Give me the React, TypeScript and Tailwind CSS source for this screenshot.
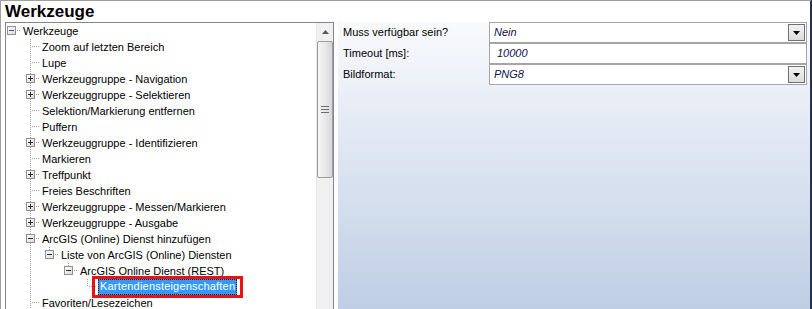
import React from 'react';

type TreeRow = {
  text: string;
  level: number;
  box?: '+' | '-';
  guides: boolean[];
  last?: boolean;
  selected?: boolean;
};

const L1 = [false];

const ROWS: TreeRow[] = [
  { text: 'Werkzeuge', level: 0, box: '-', guides: [], last: true },
  { text: 'Zoom auf letzten Bereich', level: 1, guides: L1 },
  { text: 'Lupe', level: 1, guides: L1 },
  { text: 'Werkzeuggruppe - Navigation', level: 1, box: '+', guides: L1 },
  { text: 'Werkzeuggruppe - Selektieren', level: 1, box: '+', guides: L1 },
  { text: 'Selektion/Markierung entfernen', level: 1, guides: L1 },
  { text: 'Puffern', level: 1, guides: L1 },
  { text: 'Werkzeuggruppe - Identifizieren', level: 1, box: '+', guides: L1 },
  { text: 'Markieren', level: 1, guides: L1 },
  { text: 'Treffpunkt', level: 1, box: '+', guides: L1 },
  { text: 'Freies Beschriften', level: 1, guides: L1 },
  { text: 'Werkzeuggruppe - Messen/Markieren', level: 1, box: '+', guides: L1 },
  { text: 'Werkzeuggruppe - Ausgabe', level: 1, box: '+', guides: L1 },
  { text: 'ArcGIS (Online) Dienst hinzufügen', level: 1, box: '-', guides: L1 },
  { text: 'Liste von ArcGIS (Online) Diensten', level: 2, box: '-', guides: [false, true], last: true },
  { text: 'ArcGIS Online Dienst (REST)', level: 3, box: '-', guides: [false, true, false], last: true },
  { text: 'Kartendiensteigenschaften', level: 4, guides: [false, true, false, false], last: true, selected: true },
  { text: 'Favoriten/Lesezeichen', level: 1, guides: L1 },
];

const DOT = { stroke: '#a0a0a0', strokeWidth: 1, strokeDasharray: '1 1', shapeRendering: 'crispEdges' as const };

// one 19px indent column: vertical guide of an ancestor
const Guide = ({ on }: { on: boolean }) => (
  <svg width="19" height="16" className="shrink-0">
    {on && <line x1="5.5" y1="0" x2="5.5" y2="16" {...DOT} />}
  </svg>
);

// connector + expander box of the row itself
const Connector = ({ row }: { row: TreeRow }) => {
  const hasParent = row.level > 0;
  return (
    <svg width="15" height="16" className="shrink-0">
      {hasParent && <line x1="5.5" y1="0" x2="5.5" y2={row.box ? 3 : 8} {...DOT} />}
      {hasParent && !row.last && <line x1="5.5" y1={row.box ? 12 : 8} x2="5.5" y2="16" {...DOT} />}
      <line x1={row.box ? 11 : 7} y1="7.5" x2="15" y2="7.5" {...DOT} />
      {row.box && (
        <g shapeRendering="crispEdges">
          <defs>
            <linearGradient id="bx" x1="0" y1="0" x2="1" y2="1">
              <stop offset="0" stopColor="#ffffff" />
              <stop offset="1" stopColor="#d8d8d8" />
            </linearGradient>
          </defs>
          <rect x="1.5" y="3.5" width="8" height="8" fill="url(#bx)" stroke="#919191" />
          <line x1="3" y1="7.5" x2="8" y2="7.5" stroke={row.level === 0 ? '#2d5aa8' : '#2b2b2b'} />
          {row.box === '+' && <line x1="5.5" y1="5" x2="5.5" y2="10" stroke="#2b2b3f" />}
        </g>
      )}
    </svg>
  );
};

const TreeItem = ({ row }: { row: TreeRow }) => (
  <div className="flex h-[16px] items-center whitespace-nowrap">
    {row.guides.map((g, i) => (
      <Guide key={i} on={g} />
    ))}
    <Connector row={row} />
    {row.selected ? (
      <span className="relative ml-[1px] h-[16px] bg-[#3399ff] px-[2px] leading-[14px] tracking-[0.2px] text-white outline-1 outline-dotted outline-offset-[-1px] outline-[#1f1f1f]">
        {row.text}
        <span className="pointer-events-none absolute -inset-x-[6px] -inset-y-[3px] border-[3px] border-[#ee1111]" />
      </span>
    ) : (
      <span className="px-[2px] leading-[16px] text-black">{row.text}</span>
    )}
  </div>
);

const Scrollbar = () => (
  <div className="flex w-[17px] shrink-0 flex-col border-l border-[#e6e6e6] bg-[#f0f0f0]">
    <div className="flex h-[17px] items-center justify-center">
      <svg width="7" height="4">
        <path d="M3.5 0 L7 4 L0 4 Z" fill="#5a5a5a" />
      </svg>
    </div>
    <div className="mt-[1px] flex h-[137px] items-center justify-center rounded-[2px] border border-[#9c9c9c] bg-linear-to-r from-[#f4f4f4] via-[#e9e9e9] to-[#d6d6d6]">
      <svg width="8" height="7">
        <line x1="0" y1="0.5" x2="8" y2="0.5" stroke="#6e6e6e" />
        <line x1="0" y1="3.5" x2="8" y2="3.5" stroke="#6e6e6e" />
        <line x1="0" y1="6.5" x2="8" y2="6.5" stroke="#6e6e6e" />
      </svg>
    </div>
  </div>
);

const DropButton = () => (
  <div className="mr-[1px] flex h-[17px] w-[17px] items-center justify-center border border-[#707070] bg-linear-to-b from-[#f2f2f2] to-[#dcdcdc]">
    <svg width="7" height="4">
      <path d="M0 0 L7 0 L3.5 4 Z" fill="#000" />
    </svg>
  </div>
);

const PROPS = [
  { label: 'Muss verfügbar sein?', value: 'Nein', drop: true },
  { label: 'Timeout [ms]:', value: '10000', drop: false },
  { label: 'Bildformat:', value: 'PNG8', drop: true },
];

export default function App() {
  return (
    <div
      className="h-[309px] w-[812px] overflow-hidden border-t border-l border-r-2 border-[#a0a0a0] border-r-[#26324c] bg-white"
      style={{ fontFamily: '"Liberation Sans", Arial, sans-serif' }}
    >
      <div className="h-[21px] pl-[4px] text-[17px] font-bold leading-[21px] text-black">Werkzeuge</div>

      <div className="flex h-[300px]">
        <div className="ml-[4px] flex w-[329px] shrink-0 border border-[#828790]">
          <div className="flex-1 overflow-hidden text-[11px]">
            {ROWS.map((r, i) => (
              <TreeItem key={i} row={r} />
            ))}
          </div>
          <Scrollbar />
        </div>

        <div className="ml-[4px] flex-1 bg-linear-to-b from-[#f9fafd] to-[#bccce3] text-[11px]">
          {PROPS.map((p, i) => (
            <div key={i} className="flex h-[21px]">
              <div className="w-[151px] pl-[5px] leading-[21px] text-black">{p.label}</div>
              <div className="flex w-[318px] items-center justify-between border border-[#a5a5a5] bg-white">
                <span className={`${p.drop ? 'pl-[4px]' : 'pl-[7px]'} italic text-[#10104a]`}>{p.value}</span>
                {p.drop && <DropButton />}
              </div>
            </div>
          ))}
        </div>
      </div>
    </div>
  );
}
